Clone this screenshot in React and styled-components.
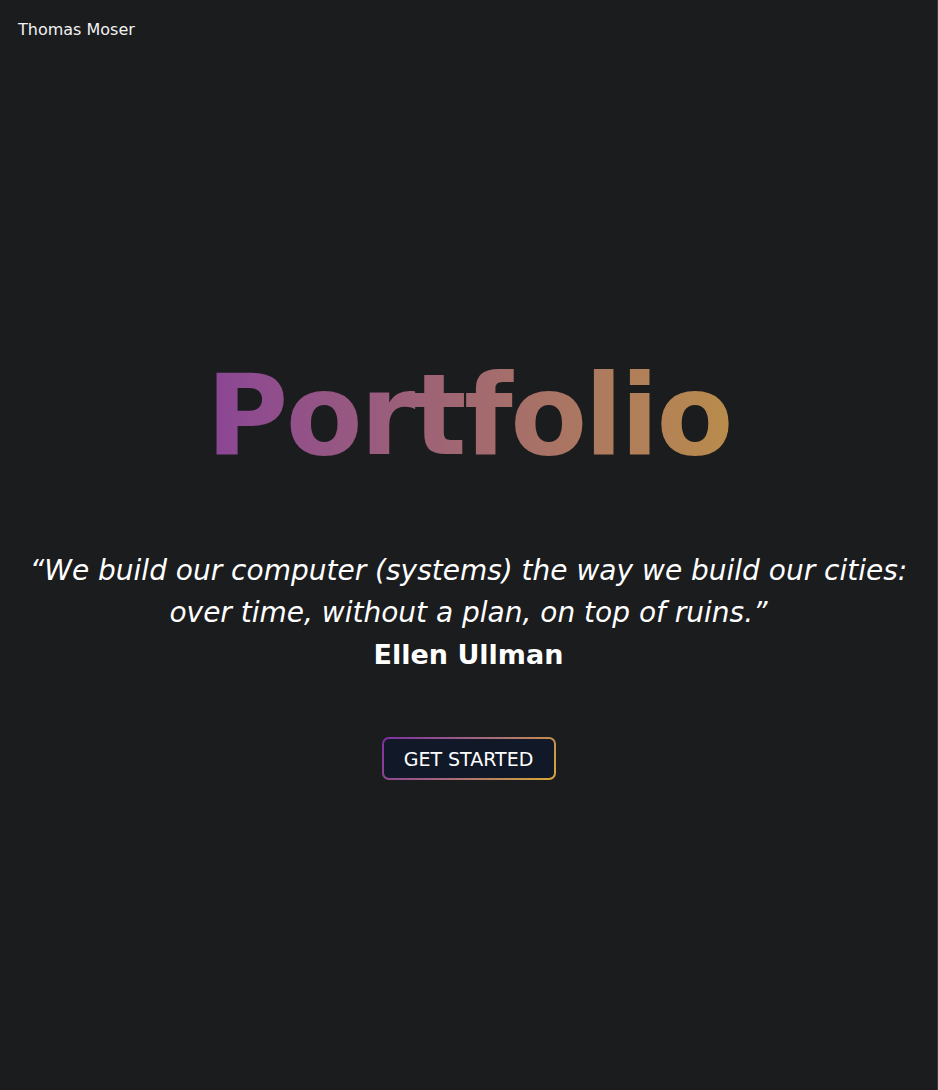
import React from "react";
import styled, { createGlobalStyle } from "styled-components";

const GlobalStyle = createGlobalStyle`
  html, body {
    margin: 0;
    padding: 0;
    background: #1b1c1e;
  }
  * {
    box-sizing: border-box;
  }
`;

const Page = styled.div`
  min-height: 100vh;
  display: flex;
  flex-direction: column;
  background: #1b1c1e;
  color: #ffffff;
  font-family: "DejaVu Sans", "Open Sans", sans-serif;
  border-right: 1px solid #3a3b3d;
`;

const Header = styled.header`
  padding: 20px 18px;
  font-size: 16px;
  color: #f2f2f2;
  height: 60px;
`;

const Hero = styled.main`
  flex: 1;
  display: flex;
  flex-direction: column;
  align-items: center;
  justify-content: center;
  text-align: center;
  padding-bottom: 22px;
`;

const Title = styled.h1`
  margin: 0;
  font-size: 112px;
  font-weight: 700;
  letter-spacing: -2.5px;
  line-height: 1.2;
  background: linear-gradient(90deg, #8a4595 0%, #b98c4c 100%);
  -webkit-background-clip: text;
  background-clip: text;
  color: transparent;
`;

const Quote = styled.blockquote`
  margin: 68px 0 0;
  font-size: 28px;
  font-style: italic;
  line-height: 42px;
  color: #ffffff;
`;

const Author = styled.p`
  margin: 0;
  font-size: 27px;
  font-weight: 700;
  line-height: 42px;
`;

const ButtonFrame = styled.div`
  margin-top: 61px;
  padding: 2px;
  border-radius: 7px;
  background: linear-gradient(135deg, #7b2fa3 0%, #a86a7a 50%, #d9a833 100%);
`;

const Button = styled.button`
  display: block;
  width: 170px;
  height: 39px;
  border: none;
  border-radius: 5px;
  background: #111827;
  color: #ffffff;
  font-family: inherit;
  font-size: 19px;
  cursor: pointer;
`;

export default function App() {
  return (
    <>
      <GlobalStyle />
      <Page>
        <Header>Thomas Moser</Header>
        <Hero>
          <Title>Portfolio</Title>
          <Quote>
            “We build our computer (systems) the way we build our cities:
            <br />
            over time, without a plan, on top of ruins.”
          </Quote>
          <Author>Ellen Ullman</Author>
          <ButtonFrame>
            <Button>GET STARTED</Button>
          </ButtonFrame>
        </Hero>
      </Page>
    </>
  );
}
